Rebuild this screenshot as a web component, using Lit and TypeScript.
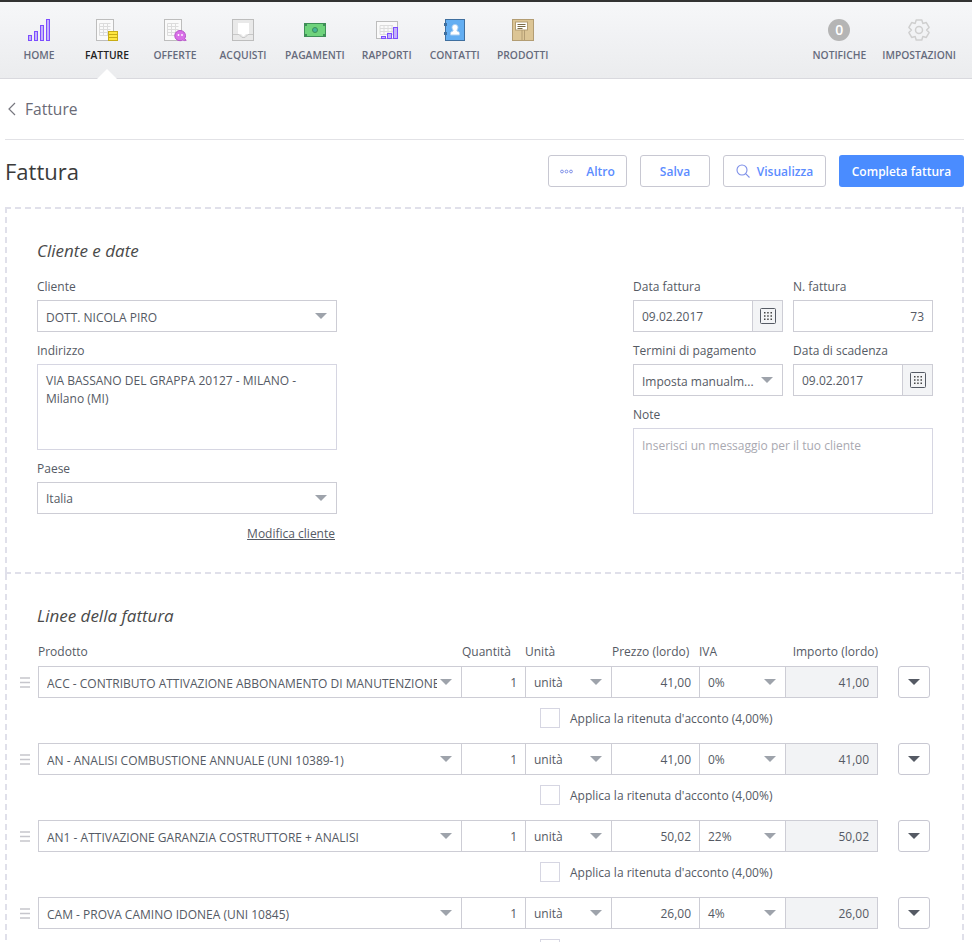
import { LitElement, html, css, svg } from 'lit';
import { customElement } from 'lit/decorators.js';

const gearPath = () => {
  // six rounded teeth around a 32x26 box
  const cx = 16, cy = 13, pts: string[] = [];
  for (let i = 0; i < 6; i++) {
    const a = (i * Math.PI) / 3 - Math.PI / 2;
    const p = (r: number, d: number) => `${(cx + r * Math.cos(a + d)).toFixed(1)} ${(cy + r * Math.sin(a + d)).toFixed(1)}`;
    pts.push(`${i ? 'L' : 'M'}${p(7.6, -0.52)} L${p(10.4, -0.27)} L${p(10.4, 0.27)} L${p(7.6, 0.52)}`);
  }
  return pts.join(' ') + ' Z';
};

const sheet = (x: number) => svg`
  <rect x=${x} y="2.5" width="17" height="21" fill="#fafafa" stroke="#bdbdbd"/>
  <path d="M${x + 3} 6.5h11M${x + 3} 9.5h11M${x + 3} 12.5h11M${x + 3} 15.5h11M${x + 3} 18.5h11M${x + 3} 6.5v12M${x + 7} 6.5v12M${x + 11} 6.5v12" stroke="#dcdcdc" fill="none"/>`;

const icons: Record<string, unknown> = {
  home: svg`<g fill="#c3b2fb" stroke="#7c4dff">
    <rect x="5.5" y="18.5" width="3" height="5"/><rect x="11.5" y="14.5" width="3" height="9"/>
    <rect x="17.5" y="8.5" width="3" height="15"/><rect x="23.5" y="2.5" width="3" height="21"/></g>`,
  fatture: svg`${sheet(5.5)}
    <rect x="17.5" y="14.5" width="9" height="9" fill="#ffe640" stroke="#c8ac14"/>
    <path d="M18 17.5h8M18 20.5h8" stroke="#c8ac14"/>`,
  offerte: svg`${sheet(5.5)}
    <path d="M21 13.5c3.2 0 5.5 2.3 5.5 5.2 0 1.2-.3 2.2-.9 3l1.6 1.6c-1.4.5-2.6.3-3.5-.2-.8.4-1.7.6-2.7.6-3 0-5.2-2.1-5.2-5 0-2.9 2.2-5.2 5.2-5.2z" fill="#d96fe8" stroke="#b553c8"/>
    <circle cx="19.5" cy="18" r=".9" fill="#fff"/><circle cx="23" cy="18" r=".9" fill="#fff"/>`,
  acquisti: svg`<rect x="5.5" y="2.5" width="21" height="21" fill="#e9e9e9" stroke="#bdbdbd"/>
    <path d="M11 6h11v11h-3l-2.5 2.5L14 17h-3z" fill="#fff"/>
    <path d="M6 17.5h6l3 3h3l3-3h5" fill="none" stroke="#c8c8c8"/>`,
  pagamenti: svg`<rect x="5.5" y="6.5" width="21" height="13" fill="#6fd37c" stroke="#3f8f58"/>
    <circle cx="16" cy="13" r="2.5" fill="#45b59a" stroke="#3f8f58"/>
    <g fill="#3f8f58"><rect x="6" y="7" width="2" height="2"/><rect x="24" y="7" width="2" height="2"/>
    <rect x="6" y="17" width="2" height="2"/><rect x="24" y="17" width="2" height="2"/></g>`,
  rapporti: svg`<rect x="5.5" y="4.5" width="21" height="17" fill="#fafafa" stroke="#bdbdbd"/>
    <path d="M9 8.5h13M9 11.5h13M9 14.5h13M9 17.5h13M9 8.5v9M13 8.5v9M17 8.5v9M21 8.5v9" stroke="#dcdcdc" fill="none"/>
    <g fill="#c3b2fb" stroke="#7c4dff"><rect x="10.5" y="19.5" width="4" height="2"/>
    <rect x="16.5" y="16.5" width="4" height="5"/><rect x="22.5" y="10.5" width="4" height="11"/></g>`,
  contatti: svg`<rect x="6.5" y="2.5" width="19" height="21" fill="#63aef2" stroke="#3f6f9f"/>
    <rect x="5" y="6" width="3" height="3" fill="#3f6f9f"/><rect x="5" y="15" width="3" height="3" fill="#3f6f9f"/>
    <path d="M16 7.5c1.8 0 3 1.3 3 3 0 1-.4 1.9-1 2.5v1c1.4.4 2.5 1 2.5 2.2V18h-9v-1.8c0-1.2 1.1-1.8 2.5-2.2v-1c-.6-.6-1-1.5-1-2.5 0-1.7 1.2-3 3-3z" fill="#fff" stroke="#a9cdf0"/>`,
  prodotti: svg`<rect x="5.5" y="2.5" width="21" height="21" fill="#dcc595" stroke="#b39d73"/>
    <path d="M15 12v11M17.5 12v11" stroke="#b39d73" fill="none"/>
    <rect x="8.5" y="5" width="12" height="8" fill="#fff" stroke="#b39d73"/>
    <path d="M10.5 7.5h8M10.5 9.5h8M10.5 11.5h5" stroke="#7a6a45" fill="none"/>`,
  gear: svg`<path d=${gearPath()} fill="none" stroke="#cfcfcf" stroke-width="1.5" stroke-linejoin="round"/>
    <circle cx="16" cy="13" r="3.5" fill="none" stroke="#cfcfcf" stroke-width="1.5"/>`,
};

const navLeft = [
  ['home', 'HOME'], ['fatture', 'FATTURE'], ['offerte', 'OFFERTE'], ['acquisti', 'ACQUISTI'],
  ['pagamenti', 'PAGAMENTI'], ['rapporti', 'RAPPORTI'], ['contatti', 'CONTATTI'], ['prodotti', 'PRODOTTI'],
];

const lines = [
  ['ACC - CONTRIBUTO ATTIVAZIONE ABBONAMENTO DI MANUTENZIONE', '41,00', '0%'],
  ['AN - ANALISI COMBUSTIONE ANNUALE (UNI 10389-1)', '41,00', '0%'],
  ['AN1 - ATTIVAZIONE GARANZIA COSTRUTTORE + ANALISI', '50,02', '22%'],
  ['CAM - PROVA CAMINO IDONEA (UNI 10845)', '26,00', '4%'],
];

@customElement('app-root')
export class AppRoot extends LitElement {
  static styles = css`
    :host {
      display: block;
      height: 942px;
      overflow: hidden;
      background: #fff;
      font-family: 'Open Sans', sans-serif;
      font-size: 12px;
      color: #555a64;
    }
    * { box-sizing: border-box; }

    .nav {
      display: flex;
      height: 79px;
      padding: 0 8px 0 5px;
      border-top: 2px solid #333;
      border-bottom: 1px solid #d9d9de;
      background: linear-gradient(#f6f7f9, #ebecee);
    }
    .spacer { flex: 1; }
    .nav-item {
      position: relative;
      display: flex;
      flex-direction: column;
      align-items: center;
      min-width: 68px;
      padding: 15px 8px 0;
      font-size: 10.3px;
      font-weight: 600;
      color: #666b7c;
      white-space: nowrap;
    }
    .nav-item svg { display: block; width: 32px; height: 26px; margin-bottom: 5px; }
    .nav-item.active { color: #222; }
    .nav-item.active::after {
      content: '';
      position: absolute;
      left: 50%;
      bottom: -1px;
      margin-left: -10px;
      border: 10px solid transparent;
      border-top: 0;
      border-bottom-color: #fff;
    }
    .badge {
      width: 22px;
      height: 22px;
      margin: 2px 0 7px;
      border-radius: 50%;
      background: #b5b5b5;
      color: #fff;
      font-size: 14px;
      font-weight: 600;
      line-height: 22px;
      text-align: center;
    }

    .main { padding: 0 8px 0 5px; }
    .crumb {
      display: flex;
      align-items: center;
      gap: 9px;
      height: 61px;
      padding: 0 2px 1px;
      border-bottom: 1px solid #e2e2e6;
      font-size: 15.6px;
      color: #6a6a76;
    }
    .crumb svg { width: 9px; height: 14px; }
    .head {
      display: flex;
      align-items: flex-start;
      gap: 13px;
      height: 67px;
      padding-top: 15px;
    }
    h1 {
      flex: 1;
      margin: 0;
      font-size: 22px;
      font-weight: 400;
      line-height: 32px;
      color: #3a3a3a;
    }
    .btn {
      display: flex;
      align-items: center;
      justify-content: center;
      gap: 7px;
      height: 32px;
      border: 1px solid #c8c8d2;
      border-radius: 3px;
      font-weight: 600;
      color: #5b8cff;
    }
    .btn svg { display: block; }
    .btn.altro { width: 79px; gap: 13px; }
    .btn.salva { width: 70px; }
    .btn.vis { width: 103px; }
    .btn.primary { width: 125px; border: 0; background: #4a8cff; color: #fff; }

    .section {
      --dash: #e0e0ea;
      --across: repeating-linear-gradient(90deg, var(--dash) 0 6px, transparent 6px 10px);
      --down: repeating-linear-gradient(180deg, var(--dash) 0 6px, transparent 6px 10px);
      background:
        var(--across) left top / 100% 2px no-repeat,
        var(--across) left bottom / 100% 2px no-repeat,
        var(--down) left top / 2px 100% no-repeat,
        var(--down) right top / 2px 100% no-repeat;
    }
    h2 {
      margin: 0;
      font-size: 17px;
      font-weight: 400;
      font-style: italic;
      line-height: 28px;
      color: #4a4a4a;
    }
    .client { height: 367px; padding: 30px 31px 0 32px; }
    .client-cols {
      display: flex;
      justify-content: space-between;
      margin-top: 13px;
    }
    .col { width: 300px; }
    .pair { display: grid; grid-template-columns: 150px 140px; column-gap: 10px; }
    label {
      display: block;
      height: 18px;
      line-height: 18px;
      margin-bottom: 4px;
      color: #555a64;
    }
    .stack { margin-top: 10px; }
    .field {
      position: relative;
      display: flex;
      align-items: center;
      height: 32px;
      padding: 0 8px;
      border: 1px solid #cdcdd5;
      background: #fff;
      white-space: nowrap;
      overflow: hidden;
    }
    .select { padding-right: 24px; }
    .select::after {
      content: '';
      position: absolute;
      right: 9px;
      top: 12px;
      border: 6px solid transparent;
      border-bottom: 0;
      border-top: 6px solid #9ea3ab;
    }
    .low { padding-top: 2px; }
    .clip { overflow: hidden; }
    .right { justify-content: flex-end; }
    .area {
      height: 86px;
      padding: 8px;
      border: 1px solid #d6d6e2;
      line-height: 18px;
    }
    .address { padding-top: 7px; }
    .placeholder { color: #a9a9b1; }
    .date { display: flex; height: 32px; border: 1px solid #cdcdd5; }
    .date span { flex: 1; padding-left: 8px; line-height: 32px; }
    .cal {
      display: flex;
      align-items: center;
      justify-content: center;
      width: 30px;
      border-left: 1px solid #cdcdd5;
      background: #f3f4f6;
    }
    .edit { margin-top: 11px; padding-right: 2px; text-align: right; }
    .edit a { color: #555a64; text-decoration: underline; }

    .lines {
      height: 500px;
      padding: 28px 31px 0 15px;
      background:
        var(--down) left top / 2px 100% no-repeat,
        var(--down) right top / 2px 100% no-repeat;
    }
    .lines h2 { margin-left: 17px; }
    .grid {
      display: grid;
      grid-template-columns: 18px 424px 64px 86px 88px 86px 92px 20px 32px;
      align-items: center;
    }
    .heads { margin: 10px 0 4px; height: 22px; }
    .heads div { white-space: nowrap; }
    .qty-head { padding-right: 17px; text-align: right; }
    .nudge { margin-left: -1px; }
    .end { text-align: right; }
    .handle { display: block; width: 10px; height: 11px; }
    .grid .field + .field { border-left: 0; }
    .total { background: #f2f3f5; }
    .more {
      display: flex;
      align-items: center;
      justify-content: center;
      grid-column: 9;
      height: 32px;
      border: 1px solid #c8c8d2;
      border-radius: 3px;
    }
    .more::after {
      content: '';
      border: 6px solid transparent;
      border-bottom: 0;
      border-top: 6px solid #555a64;
    }
    .withhold {
      display: flex;
      align-items: center;
      gap: 10px;
      height: 20px;
      margin: 10px 0 15px;
      padding-left: 520px;
    }
    .box {
      width: 20px;
      height: 20px;
      border: 1px solid #d6d6e2;
    }
  `;

  private navItem(key: string, text: string) {
    return html`
      <div class="nav-item ${key === 'fatture' ? 'active' : ''}">
        <svg viewBox="0 0 32 26">${icons[key]}</svg>${text}
      </div>`;
  }

  private calendar() {
    return html`<div class="cal">
      <svg width="16" height="16" viewBox="0 0 16 16">
        <rect x=".5" y=".5" width="15" height="15" rx="1" fill="none" stroke="#555a64"/>
        <path d="M4 4h1.5v1.5H4zM7.2 4h1.5v1.5H7.2zM10.5 4H12v1.5h-1.5zM4 7.2h1.5v1.5H4zM7.2 7.2h1.5v1.5H7.2zM10.5 7.2H12v1.5h-1.5zM4 10.5h1.5V12H4zM7.2 10.5h1.5V12H7.2zM10.5 10.5H12V12h-1.5z" fill="#444"/>
      </svg>
    </div>`;
  }

  private line([product, price, vat]: string[]) {
    return html`
      <div class="grid">
        <svg class="handle" viewBox="0 0 10 11">
          <path d="M0 1h10M0 5.5h10M0 10h10" stroke="#c6c6cc" stroke-width="1.5"/>
        </svg>
        <div class="field select low"><span class="clip">${product}</span></div>
        <div class="field right">1</div>
        <div class="field select">unità</div>
        <div class="field right">${price}</div>
        <div class="field select">${vat}</div>
        <div class="field right total">${price}</div>
        <div class="more"></div>
      </div>
      <div class="withhold"><span class="box"></span>Applica la ritenuta d'acconto (4,00%)</div>`;
  }

  render() {
    return html`
      <div class="nav">
        ${navLeft.map(([k, t]) => this.navItem(k, t))}
        <div class="spacer"></div>
        <div class="nav-item"><div class="badge">0</div>NOTIFICHE</div>
        ${this.navItem('gear', 'IMPOSTAZIONI')}
      </div>
      <div class="main">
        <div class="crumb">
          <svg viewBox="0 0 9 14"><path d="M8 1L2 7l6 6" fill="none" stroke="#77777f" stroke-width="1.2"/></svg>
          Fatture
        </div>
        <div class="head">
          <h1>Fattura</h1>
          <div class="btn altro">
            <svg width="13" height="5" viewBox="0 0 13 5" fill="none" stroke="#7d8fe8">
              <circle cx="2" cy="2.5" r="1.4"/><circle cx="6.5" cy="2.5" r="1.4"/><circle cx="11" cy="2.5" r="1.4"/>
            </svg>
            Altro
          </div>
          <div class="btn salva">Salva</div>
          <div class="btn vis">
            <svg width="14" height="14" viewBox="0 0 14 14" fill="none" stroke="#7d8fe8" stroke-width="1.1">
              <circle cx="6" cy="6" r="5"/><path d="M9.6 9.6L13.5 13.5"/>
            </svg>
            Visualizza
          </div>
          <div class="btn primary">Completa fattura</div>
        </div>

        <div class="section client">
          <h2>Cliente e date</h2>
          <div class="client-cols">
            <div class="col">
              <label>Cliente</label>
              <div class="field select low">DOTT. NICOLA PIRO</div>
              <div class="stack">
                <label>Indirizzo</label>
                <div class="area address">VIA BASSANO DEL GRAPPA 20127 - MILANO -<br />Milano (MI)</div>
              </div>
              <div class="stack">
                <label>Paese</label>
                <div class="field select">Italia</div>
              </div>
              <div class="edit"><a>Modifica cliente</a></div>
            </div>
            <div class="col">
              <div class="pair">
                <div>
                  <label>Data fattura</label>
                  <div class="date"><span>09.02.2017</span>${this.calendar()}</div>
                </div>
                <div>
                  <label>N. fattura</label>
                  <div class="field right">73</div>
                </div>
              </div>
              <div class="pair stack">
                <div>
                  <label>Termini di pagamento</label>
                  <div class="field select low">Imposta manualm...</div>
                </div>
                <div>
                  <label>Data di scadenza</label>
                  <div class="date"><span>09.02.2017</span>${this.calendar()}</div>
                </div>
              </div>
              <div class="stack">
                <label>Note</label>
                <div class="area placeholder">Inserisci un messaggio per il tuo cliente</div>
              </div>
            </div>
          </div>
        </div>

        <div class="section lines">
          <h2>Linee della fattura</h2>
          <div class="grid heads">
            <div></div>
            <div>Prodotto</div>
            <div class="qty-head">Quantità</div>
            <div class="nudge">Unità</div>
            <div>Prezzo (lordo)</div>
            <div class="nudge">IVA</div>
            <div class="end">Importo (lordo)</div>
          </div>
          ${lines.map((l) => this.line(l))}
        </div>
      </div>
    `;
  }
}
